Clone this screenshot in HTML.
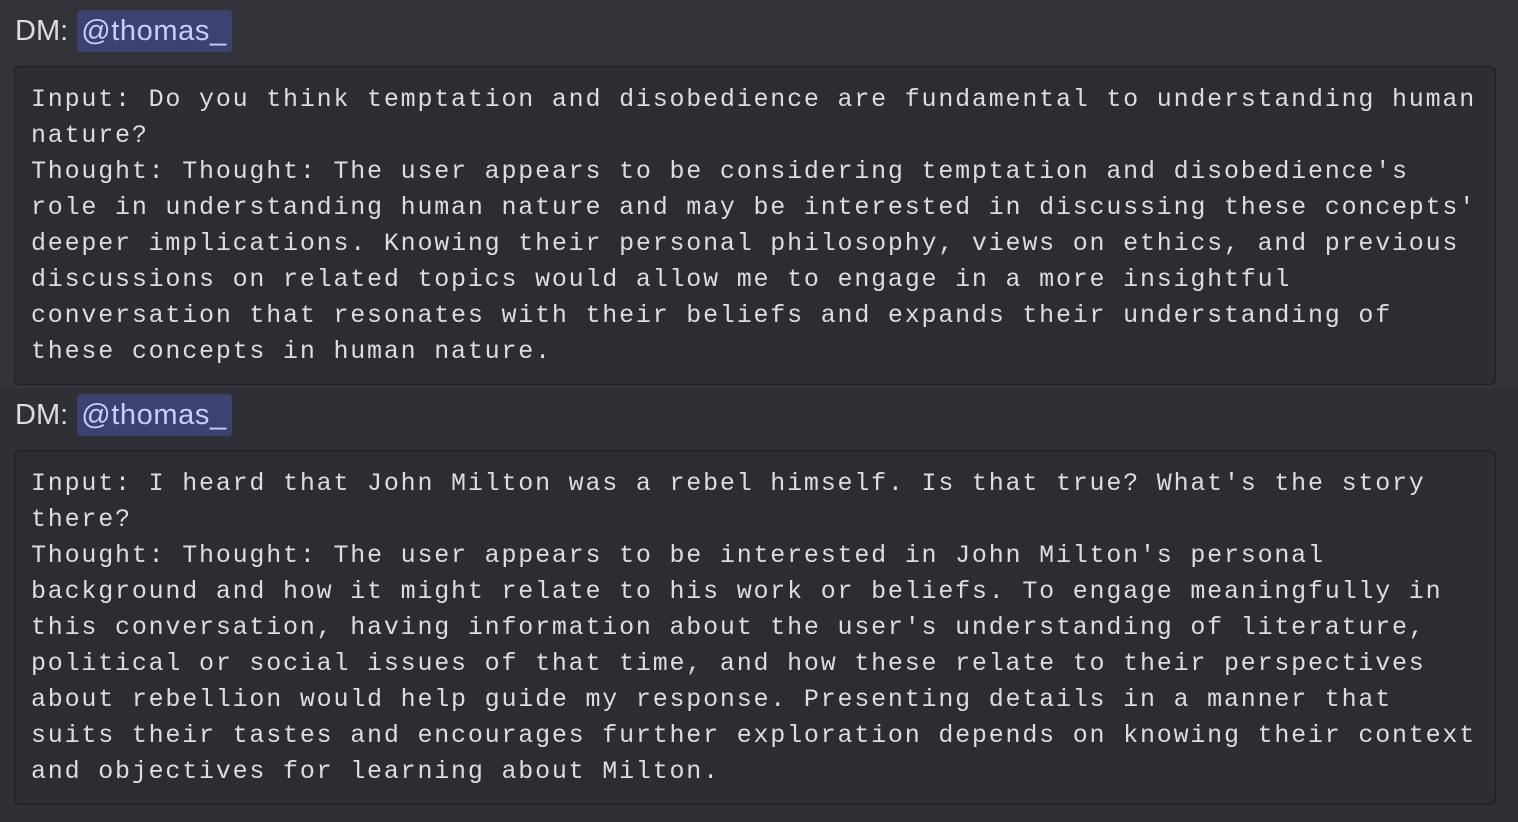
<!DOCTYPE html>
<html><head><meta charset="utf-8"><style>
html,body{margin:0;padding:0;}
body{width:1518px;height:822px;background:#313338;position:relative;overflow:hidden;font-family:"Liberation Sans",sans-serif;color:#dbdee1;}
.hov{position:absolute;left:0;top:389px;width:1518px;height:433px;background:#2e3035;}
.dm{position:absolute;left:15px;font-size:29px;line-height:42px;height:42px;}
.m{display:inline-block;background:#3c4270;color:#c9cdfb;border-radius:4px;padding:0 5px 0 4px;margin-left:1px;letter-spacing:0.6px;}
.cb{position:absolute;left:14px;width:1482px;background:#2b2d31;border:1px solid #1e1f22;border-radius:6px;box-sizing:border-box;padding:15px 0 0 16px;}
pre{margin:0;font-family:"Liberation Mono",monospace;font-size:25px;letter-spacing:1.8px;line-height:36px;color:#dbdee1;}
</style></head><body>
<div class="hov"></div>
<div class="dm" style="top:10px">DM: <span class="m">@thomas_</span></div>
<div class="cb" style="top:66px;height:319px"><pre>Input: Do you think temptation and disobedience are fundamental to understanding human
nature?
Thought: Thought: The user appears to be considering temptation and disobedience's
role in understanding human nature and may be interested in discussing these concepts'
deeper implications. Knowing their personal philosophy, views on ethics, and previous
discussions on related topics would allow me to engage in a more insightful
conversation that resonates with their beliefs and expands their understanding of
these concepts in human nature.</pre></div>
<div class="dm" style="top:394px">DM: <span class="m">@thomas_</span></div>
<div class="cb" style="top:450px;height:355px"><pre>Input: I heard that John Milton was a rebel himself. Is that true? What's the story
there?
Thought: Thought: The user appears to be interested in John Milton's personal
background and how it might relate to his work or beliefs. To engage meaningfully in
this conversation, having information about the user's understanding of literature,
political or social issues of that time, and how these relate to their perspectives
about rebellion would help guide my response. Presenting details in a manner that
suits their tastes and encourages further exploration depends on knowing their context
and objectives for learning about Milton.</pre></div>
</body></html>
